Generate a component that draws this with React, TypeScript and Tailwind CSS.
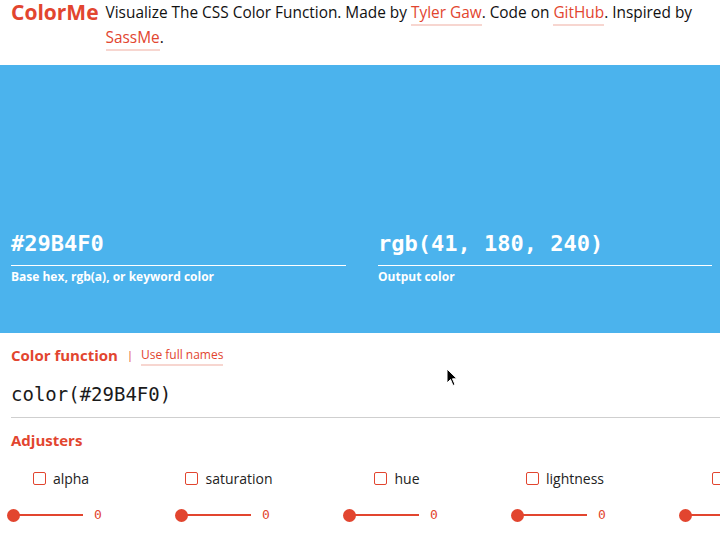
import React from "react";

const RED = "text-[#e2452f]";

const adjusters = ["alpha", "saturation", "hue", "lightness", "tint"];

function Link({ children }: { children: React.ReactNode }) {
  return (
    <a href="#" className={`${RED} border-b-2 border-[#f7d6d0] pb-[1px]`}>
      {children}
    </a>
  );
}

function Adjuster({ name }: { name: string }) {
  return (
    <div className="w-[168px] shrink-0">
      <div className="flex h-[20px] w-[122px] items-center justify-center gap-[7px]">
        <span className="h-[13px] w-[13px] shrink-0 rounded-[2px] border border-[#e2452f] bg-white" />
        <span className="text-[14px] text-[#222]">{name}</span>
      </div>
      <div className="mt-[17px] flex h-[20px] items-center pl-[7px]">
        <span className="h-[13px] w-[13px] rounded-full bg-[#e2452f]" />
        <span className="-ml-px h-[2px] w-[64px] bg-[#e2452f]" />
        <span
          className={`ml-[11px] text-[13px] ${RED}`}
          style={{ fontFamily: '"DejaVu Sans Mono", monospace' }}
        >
          0
        </span>
      </div>
    </div>
  );
}

export default function App() {
  return (
    <div
      className="relative h-[537px] w-[720px] overflow-hidden bg-white"
      style={{ fontFamily: '"Open Sans", "Noto Sans", sans-serif' }}
    >
      {/* header */}
      <header className="flex h-[65px] gap-[7px] px-[11px] leading-[25px]">
        <h1 className={`shrink-0 text-[21px] font-bold ${RED}`}>ColorMe</h1>
        <p className="text-[15.4px] text-[#111]">
          Visualize The CSS Color Function. Made by <Link>Tyler Gaw</Link>. Code on{" "}
          <Link>GitHub</Link>. Inspired by <Link>SassMe</Link>.
        </p>
      </header>

      {/* color preview */}
      <section className="flex h-[268px] items-end bg-[#4bb3ed] pb-[48px] pl-[11px] text-white">
        <div className="grid w-full grid-cols-[335px_334px] gap-[32px]">
          <div>
            <div
              className="border-b border-white pb-[6px] text-[22px] font-bold leading-[30px]"
              style={{ fontFamily: '"DejaVu Sans Mono", monospace' }}
            >
              #29B4F0
            </div>
            <div className="mt-[3px] text-[12px] font-bold leading-[16px]">
              Base hex, rgb(a), or keyword color
            </div>
          </div>
          <div>
            <div
              className="border-b border-white pb-[6px] text-[22px] font-bold leading-[30px]"
              style={{ fontFamily: '"DejaVu Sans Mono", monospace' }}
            >
              rgb(41, 180, 240)
            </div>
            <div className="mt-[3px] text-[12px] font-bold leading-[16px]">Output color</div>
          </div>
        </div>
      </section>

      {/* function */}
      <section className="pl-[11px] pt-[12px]">
        <div className="flex h-[20px] items-center">
          <h2 className={`text-[15px] font-bold ${RED}`}>Color function</h2>
          <span className={`ml-[9px] text-[11px] ${RED}`}>|</span>
          <span className="ml-[8px] text-[12px]">
            <Link>Use full names</Link>
          </span>
        </div>
        <div
          className="mt-[17px] border-b border-[#cfcfcf] pb-[11px] text-[19px] leading-[24px] text-[#1a1a1a]"
          style={{ fontFamily: '"DejaVu Sans Mono", monospace' }}
        >
          color(#29B4F0)
        </div>
        <h2 className={`mt-[12px] text-[15px] font-bold leading-[20px] ${RED}`}>Adjusters</h2>
      </section>

      <div className="mt-[18px] flex">
        {adjusters.map((a) => (
          <Adjuster key={a} name={a} />
        ))}
      </div>

      {/* mouse pointer */}
      <svg className="absolute left-[446px] top-[368px]" width="12" height="19" viewBox="0 0 12 19">
        <path
          d="M1 1 L1 15 L4.5 11.5 L7 17.5 L9 16.5 L6.5 10.8 L11 10.8 Z"
          fill="#000"
          stroke="#fff"
          strokeWidth="1"
        />
      </svg>
    </div>
  );
}
